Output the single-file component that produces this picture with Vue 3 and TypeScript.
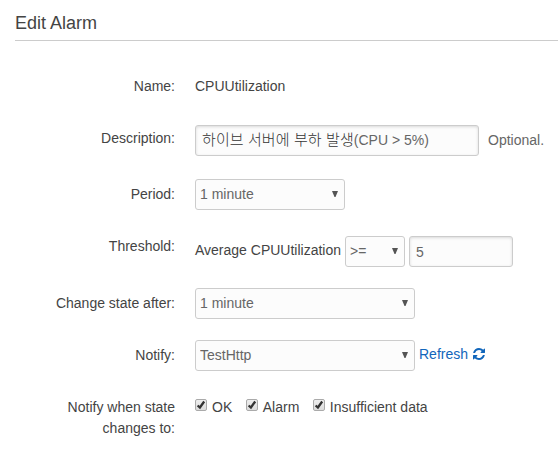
<script setup lang="ts">
import { ref } from 'vue'

interface StateOption {
  label: string
  checked: boolean
}

const threshold = ref<string>('5')
const states = ref<StateOption[]>([
  { label: 'OK', checked: true },
  { label: 'Alarm', checked: true },
  { label: 'Insufficient data', checked: true },
])
</script>

<template>
  <main class="page">
    <h1 class="title">Edit Alarm</h1>
    <form class="form">
      <div class="row row-name">
        <span class="label">Name:</span>
        <span class="value">CPUUtilization</span>
      </div>
      <div class="row row-description">
        <span class="label">Description:</span>
        <div class="controls">
          <div class="field description" role="textbox" contenteditable="true" spellcheck="false"><span class="korean" lang="ko">하이브 서버에 부하 발생</span><span>(CPU &gt; 5%)</span></div>
          <span class="optional">Optional.</span>
        </div>
      </div>
      <div class="row row-period">
        <label class="label" for="period">Period:</label>
        <div class="select period">
          <select id="period" class="field"><option>1 minute</option></select>
          <svg class="caret" viewBox="0 0 6 6"><path d="M0 0h6L3.5 6h-1z" /></svg>
        </div>
      </div>
      <div class="row row-threshold">
        <label class="label" for="threshold">Threshold:</label>
        <div class="controls">
          <span class="metric">Average CPUUtilization</span>
          <div class="select operator">
            <select class="field"><option>&gt;=</option></select>
            <svg class="caret" viewBox="0 0 6 6"><path d="M0 0h6L3.5 6h-1z" /></svg>
          </div>
          <input id="threshold" v-model="threshold" class="field threshold" type="text" />
        </div>
      </div>
      <div class="row row-select">
        <label class="label" for="after">Change state after:</label>
        <div class="select wide">
          <select id="after" class="field"><option>1 minute</option></select>
          <svg class="caret" viewBox="0 0 6 6"><path d="M0 0h6L3.5 6h-1z" /></svg>
        </div>
      </div>
      <div class="row row-select">
        <label class="label" for="notify">Notify:</label>
        <div class="controls">
          <div class="select wide">
            <select id="notify" class="field"><option>TestHttp</option></select>
            <svg class="caret" viewBox="0 0 6 6"><path d="M0 0h6L3.5 6h-1z" /></svg>
          </div>
          <a class="refresh">
            <span>Refresh</span>
            <svg viewBox="0 0 1536 1536"><path d="M1511 928q0 5-1 7-64 268-268 434.5t-478 166.5q-146 0-282.5-55t-243.5-157l-129 129q-19 19-45 19t-45-19-19-45v-448q0-26 19-45t45-19h448q26 0 45 19t19 45-19 45l-137 137q71 66 161 102t187 36q134 0 250-65t186-179q11-17 53-117 8-23 30-23h192q13 0 22.5 9.5t9.5 22.5zm25-800v448q0 26-19 45t-45 19h-448q-26 0-45-19t-19-45 19-45l138-138q-148-137-349-137-134 0-250 65t-186 179q-11 17-53 117-8 23-30 23h-199q-13 0-22.5-9.5t-9.5-22.5v-7q65-268 270-434.5t480-166.5q146 0 284 55.5t245 156.5l130-129q19-19 45-19t45 19 19 45z" /></svg>
          </a>
        </div>
      </div>
      <div class="row row-states">
        <span class="label">Notify when state changes to:</span>
        <div class="states">
          <label v-for="state in states" :key="state.label" class="state">
            <input v-model="state.checked" class="native" type="checkbox" />
            <span class="box">
              <svg v-if="state.checked" viewBox="0 0 10 10"><path d="M1.6 5.5L3.9 7.5L8.2 1.5" /></svg>
            </span>
            <span>{{ state.label }}</span>
          </label>
        </div>
      </div>
    </form>
  </main>
</template>

<style>
body {
  background: #fff;
  overflow: hidden;
}
</style>

<style scoped>
.page {
  box-sizing: border-box;
  height: 466px;
  padding: 12px 0 0 15px;
  color: #444;
  font-family: "Liberation Sans", "Noto Sans CJK KR", sans-serif;
  font-size: 14px;
  line-height: 21px;
}

.title {
  box-sizing: border-box;
  height: 29px;
  margin: 0;
  border-bottom: 1px solid #ccc;
  font-size: 18px;
  font-weight: 400;
  line-height: 22px;
}

.form {
  display: flex;
  flex-direction: column;
  padding-top: 35px;
}

.row {
  display: grid;
  grid-template-columns: 160px 1fr;
  column-gap: 20px;
  align-items: start;
}

.row-name {
  height: 49px;
}

.row-description {
  height: 54px;
}

.row-period {
  height: 57px;
}

.row-threshold,
.row-select {
  height: 52px;
}

.label {
  padding-top: 3px;
  text-align: right;
}

.row-name .label {
  padding-top: 0;
}

.row-period .label,
.row-select .label {
  padding-top: 5px;
}

.row-threshold .label {
  padding-top: 0;
}

.row-states .label {
  width: 120px;
  justify-self: end;
  padding-top: 5px;
}

.controls {
  display: flex;
  align-items: flex-start;
}

.field {
  box-sizing: border-box;
  height: 31px;
  margin: 0;
  border: 1px solid #ccc;
  border-radius: 3px;
  outline: 0;
  background: #fcfcfc;
  color: #666;
  font: inherit;
}

.description,
.threshold {
  padding: 0 6px;
  box-shadow: inset 0 1px 3px rgba(0, 0, 0, 0.14);
}

select.field {
  width: 100%;
  padding: 0 4px;
  appearance: none;
}

.description {
  display: flex;
  width: 284px;
  padding-top: 4px;
  line-height: 21px;
  white-space: pre;
}

.korean {
  height: 21px;
  margin-top: -1px;
  color: #333;
  font-size: 15px;
  font-weight: 300;
  line-height: 21px;
  letter-spacing: 0.1px;
}

.optional {
  padding: 5px 0 0 9px;
  color: #666;
}

.select {
  position: relative;
  height: 31px;
}

.caret {
  position: absolute;
  top: 12px;
  right: 7px;
  width: 6px;
  height: 6px;
  fill: #555;
  pointer-events: none;
}

.period {
  width: 150px;
}

.metric {
  width: 150px;
  padding-top: 4px;
  white-space: nowrap;
}

.operator {
  width: 60px;
  margin-right: 4px;
}

.threshold {
  width: 104px;
}

.wide {
  width: 220px;
}

.refresh {
  display: flex;
  align-items: flex-start;
  gap: 5px;
  padding: 4px 0 0 4px;
  color: #1166bb;
}

.refresh svg {
  width: 12px;
  height: 12px;
  margin-top: 4px;
  fill: currentColor;
}

.states {
  display: flex;
  gap: 13.5px;
  padding-top: 5px;
}

.state {
  display: flex;
  align-items: flex-start;
  gap: 5px;
}

.native {
  display: none;
}

.box {
  box-sizing: border-box;
  display: flex;
  width: 12px;
  height: 12px;
  margin-top: 2px;
  border: 1px solid #aaa;
  border-radius: 2px;
  background: linear-gradient(#eee, #dcdcdc);
}

.box svg {
  width: 10px;
  height: 10px;
  fill: none;
  stroke: #333;
  stroke-width: 2.3;
}
</style>
